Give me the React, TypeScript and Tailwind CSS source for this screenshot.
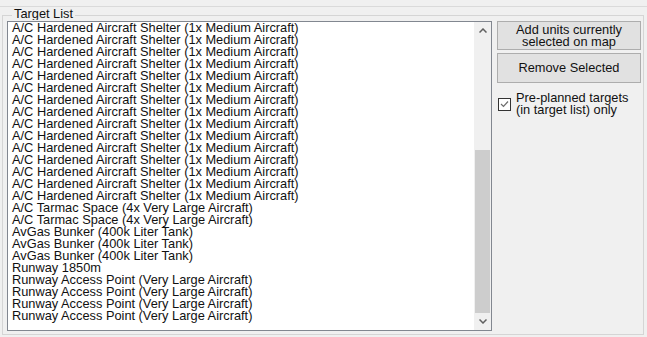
import React from "react";

const rows: string[] = [
  ...Array(15).fill("A/C Hardened Aircraft Shelter (1x Medium Aircraft)"),
  "A/C Tarmac Space (4x Very Large Aircraft)",
  "A/C Tarmac Space (4x Very Large Aircraft)",
  "AvGas Bunker (400k Liter Tank)",
  "AvGas Bunker (400k Liter Tank)",
  "AvGas Bunker (400k Liter Tank)",
  "Runway 1850m",
  "Runway Access Point (Very Large Aircraft)",
  "Runway Access Point (Very Large Aircraft)",
  "Runway Access Point (Very Large Aircraft)",
  "Runway Access Point (Very Large Aircraft)",
];

const font = { fontFamily: '"Liberation Sans", Arial, sans-serif' };

export default function App() {
  return (
    <div
      className="relative w-[647px] h-[337px] bg-[#f0f0f0] overflow-hidden text-[12.8px] text-[#111]"
      style={font}
    >
      <div className="mt-[6px] h-px bg-[#dadada]" />
      <div className="mt-[8px] ml-[2px] w-[642px] h-[320px] border border-[#d5d5d5] flex items-start pl-[4px] pt-[5px]">
        <div className="w-[485px] h-[310px] border border-[#828790] bg-white flex">
          <div className="flex-1 pl-[4px] leading-[12px] whitespace-nowrap overflow-hidden">
            {rows.map((r, i) => (
              <div key={i} className="h-[12px]">
                {r}
              </div>
            ))}
          </div>
          <div className="w-[17px] h-full bg-[#f0f0f0] flex flex-col">
            <div className="h-[17px] flex items-center justify-center">
              <svg width="8" height="5" viewBox="0 0 8 5">
                <path d="M0.5 4.5 L4 1 L7.5 4.5" fill="none" stroke="#606060" strokeWidth="1.5" />
              </svg>
            </div>
            <div className="h-[111px]" />
            <div className="h-[163px] mx-px bg-[#cdcdcd]" />
            <div className="h-[17px] flex items-center justify-center">
              <svg width="8" height="5" viewBox="0 0 8 5">
                <path d="M0.5 0.5 L4 4 L7.5 0.5" fill="none" stroke="#606060" strokeWidth="1.5" />
              </svg>
            </div>
          </div>
        </div>
        <div className="ml-[5px] flex flex-col w-[144px]">
          <div className="h-[29px] border border-[#adadad] bg-[#e1e1e1] flex flex-col items-center justify-center leading-[12px]">
            <span>Add units currently</span>
            <span>selected on map</span>
          </div>
          <div className="mt-[3px] h-[30px] border border-[#adadad] bg-[#e1e1e1] flex items-center justify-center">
            Remove Selected
          </div>
          <div className="mt-[9px] flex items-center">
            <div className="ml-[1px] w-[13px] h-[13px] border border-[#333333] bg-white flex items-center justify-center">
              <svg width="9" height="8" viewBox="0 0 9 8">
                <path d="M1 4 L3.5 6.5 L8 1.5" fill="none" stroke="#6e6e6e" strokeWidth="1.2" />
              </svg>
            </div>
            <div className="ml-[5px] leading-[12px] flex flex-col">
              <span>Pre-planned targets</span>
              <span>(in target list) only</span>
            </div>
          </div>
        </div>
      </div>
      <div className="absolute left-[12px] top-[8px] h-[12px] overflow-hidden bg-[#f0f0f0] px-[2px]">
        <div className="-mt-[1px] leading-[14px]">Target List</div>
      </div>
    </div>
  );
}
